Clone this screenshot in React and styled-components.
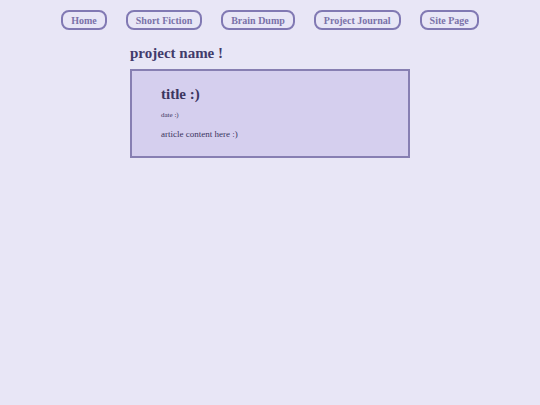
import React from 'react';
import styled, { createGlobalStyle } from 'styled-components';

const GlobalStyle = createGlobalStyle`
    body {
        margin: 0;
        background: #e8e6f6;
        font-family: "Liberation Serif", "DejaVu Serif", serif;
    }
`;

const Nav = styled.nav`
    display: flex;
    justify-content: center;
    gap: 19px;
    padding-top: 10px;
`;

const NavButton = styled.a`
    display: flex;
    align-items: center;
    height: 16px;
    padding: 0 8px;
    border: 2px solid #8179b3;
    border-radius: 8px;
    color: #7a72a9;
    font-size: 10px;
    font-weight: bold;
    text-decoration: none;
`;

const Main = styled.main`
    width: 280px;
    margin: 0 auto;
`;

const ProjectName = styled.h1`
    margin: 15px 0 7px;
    font-size: 15px;
    color: #423b6b;
`;

const Article = styled.article`
    background: #d5cfee;
    border: 2px solid #877fb2;
    padding: 15px 29px 17px;
    color: #3b3560;
`;

const Title = styled.h2`
    margin: 0;
    font-size: 15px;
`;

const Date = styled.div`
    margin-top: 8px;
    font-size: 7px;
`;

const Content = styled.p`
    margin: 10px 0 0;
    font-size: 9px;
`;

const links = ['Home', 'Short Fiction', 'Brain Dump', 'Project Journal', 'Site Page'];

export default function App() {
    return (
        <>
            <GlobalStyle />
            <Nav>
                {links.map((l) => (
                    <NavButton key={l} href="#">{l}</NavButton>
                ))}
            </Nav>
            <Main>
                <ProjectName>project name !</ProjectName>
                <Article>
                    <Title>title :)</Title>
                    <Date>date :)</Date>
                    <Content>article content here :)</Content>
                </Article>
            </Main>
        </>
    );
}
